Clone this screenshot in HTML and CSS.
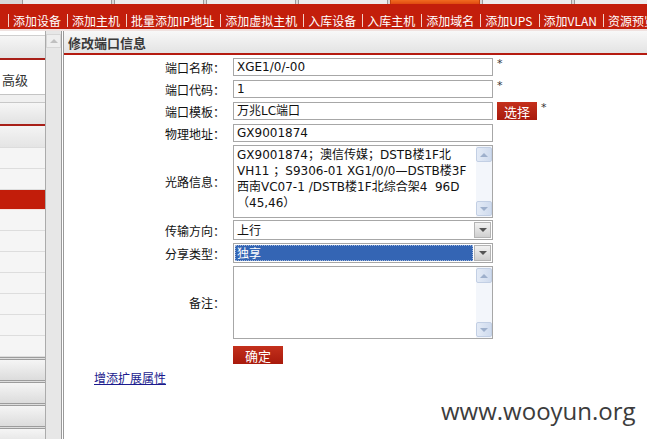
FILE: index.html
```html
<!DOCTYPE html>
<html lang="zh">
<head>
<meta charset="utf-8">
<title>修改端口信息</title>
<link rel="stylesheet" href="styles.css">
</head>
<body>
<div class="page">
  <div class="tabs">
    <span class="tab"></span><span class="tab"></span><span class="tab"></span><span class="tab"></span><span class="tab active"></span><span class="tab"></span><span class="tab"></span>
  </div>
  <div class="nav">
    <span class="nav-item">添加设备</span>
    <span class="nav-item">添加主机</span>
    <span class="nav-item">批量添加IP地址</span>
    <span class="nav-item">添加虚拟主机</span>
    <span class="nav-item">入库设备</span>
    <span class="nav-item">入库主机</span>
    <span class="nav-item">添加域名</span>
    <span class="nav-item">添加UPS</span>
    <span class="nav-item">添加VLAN</span>
    <span class="nav-item">资源预览</span>
  </div>
  <div class="nav-edge"></div>
  <div class="layout">
    <div class="side">
      <div class="s-gap"></div>
      <div class="s-bar s-bar1"></div>
      <div class="s-text">高级</div>
      <div class="s-band"></div>
      <div class="s-bar s-bar2"></div>
      <div class="s-bar3"></div>
      <div class="s-row"></div>
      <div class="s-row"></div>
      <div class="s-row s-active"></div>
      <div class="s-row"></div>
      <div class="s-row"></div>
      <div class="s-row"></div>
      <div class="s-row"></div>
      <div class="s-row"></div>
      <div class="s-row"></div>
      <div class="s-row"></div>
      <div class="s-menu"></div>
      <div class="s-menu"></div>
      <div class="s-menu"></div>
      <div class="s-menu"></div>
    </div>
    <div class="side-scroll">
      <div class="sc-up"><span class="tri-up"></span></div>
    </div>
    <div class="divider"></div>
    <div class="main">
      <div class="main-head">修改端口信息</div>
      <div class="form">
        <div class="row r4">
          <div class="label">端口名称：</div>
          <div class="field"><div class="input">XGE1/0/-00</div><span class="star">*</span></div>
        </div>
        <div class="row r4">
          <div class="label">端口代码：</div>
          <div class="field"><div class="input">1</div><span class="star">*</span></div>
        </div>
        <div class="row r4">
          <div class="label">端口模板：</div>
          <div class="field"><div class="input">万兆LC端口</div><span class="btn btn-pick">选择</span><span class="star">*</span></div>
        </div>
        <div class="row r3">
          <div class="label">物理地址：</div>
          <div class="field"><div class="input">GX9001874</div></div>
        </div>
        <div class="row r2">
          <div class="label">光路信息：</div>
          <div class="field">
            <div class="area">
              <div class="area-text">GX9001874；澳信传媒；DSTB楼1F北<br>VH11 ；S9306-01 XG1/0/0—DSTB楼3F<br>西南VC07-1 /DSTB楼1F北综合架4&nbsp;&nbsp;96D<br>（45,46）</div>
              <div class="vscroll"><span class="vs-btn"><span class="vs-up"></span></span><span class="vs-btn"><span class="vs-down"></span></span></div>
            </div>
          </div>
        </div>
        <div class="row r3">
          <div class="label">传输方向：</div>
          <div class="field"><div class="select"><span class="sel-text">上行</span><span class="sel-btn"><span class="tri-down"></span></span></div></div>
        </div>
        <div class="row r3">
          <div class="label">分享类型：</div>
          <div class="field"><div class="select"><span class="sel-text sel-hl">独享</span><span class="sel-btn"><span class="tri-down"></span></span></div></div>
        </div>
        <div class="row r7">
          <div class="label">备注：</div>
          <div class="field">
            <div class="area">
              <div class="area-text"></div>
              <div class="vscroll"><span class="vs-btn"><span class="vs-up"></span></span><span class="vs-btn"><span class="vs-down"></span></span></div>
            </div>
          </div>
        </div>
        <div class="row">
          <div class="label"></div>
          <div class="field"><span class="btn btn-ok">确定</span></div>
        </div>
        <a class="ext-link" href="#">增添扩展属性</a>
      </div>
      <div class="watermark">www.wooyun.org</div>
    </div>
  </div>
</div>
</body>
</html>
```

FILE: styles.css
```css
* { box-sizing: border-box; }
html, body { margin: 0; padding: 0; background: #fff; }
body {
  font-family: "Noto Sans CJK SC", "DejaVu Sans", sans-serif;
  font-size: 12px;
  color: #000;
}
.page { width: 647px; height: 439px; overflow: hidden; position: relative; }

/* top tabs */
.tabs {
  height: 4px;
  display: flex;
  gap: 2px;
  padding-left: 22px;
  background: #d8d8d8;
  overflow: hidden;
}
.tab {
  width: 90px;
  flex: none;
  height: 4px;
  background: #ececec;
  border-left: 1px solid #9a9a9a;
  border-right: 1px solid #9a9a9a;
}
.tab.active { background: linear-gradient(#f06a20, #e04a10); border-color: #c0400c; }

/* red nav */
.nav {
  height: 25px;
  background: #c31e0b;
  display: flex;
  align-items: flex-end;
  padding: 0 0 2px 8px;
  white-space: nowrap;
  overflow: hidden;
  color: #fff;
}
.nav-item {
  flex: none;
  border-left: 1px solid #f3d0c8;
  padding-left: 4px;
  margin-right: 6px;
  line-height: 13px;
  height: 13px;
  font-size: 12px;
}
.nav-edge { height: 2px; background: #efe1df; }

/* layout */
.layout { display: flex; height: 408px; }

.side {
  width: 46px;
  flex: none;
  border-right: 1px solid #ababab;
  display: flex;
  flex-direction: column;
  overflow: hidden;
}
.s-gap { height: 5px; flex: none; border-bottom: 1px solid #cfcfcf; }
.s-bar { flex: none; background: linear-gradient(#f6f6f6, #e2e2e2); }
.s-bar1 { height: 24px; border-bottom: 2px solid #a81f18; }
.s-text {
  height: 35px;
  flex: none;
  border-bottom: 1px solid #c4c4c4;
  padding-left: 2px;
  line-height: 40px;
  font-size: 13px;
  color: #333;
}
.s-band { height: 8px; flex: none; background: #f0f0f0; border-bottom: 1px solid #c8c8c8; }
.s-bar2 { height: 23px; border-bottom: 2px solid #a81f18; }
.s-bar3 { height: 22px; flex: none; background: linear-gradient(#f4f4f4, #e4e4e4); border-bottom: 1px solid #dcdcdc; }
.s-row { height: 21px; flex: none; background: #f5f5f5; border-bottom: 1px solid #dddddd; }
.s-row.s-active { background: #c21d0a; border-bottom: 1px solid #f6e2de; height: 20px; }
.s-menu {
  height: 23px;
  flex: none;
  border-top: 3px double #9c9c9c;
  background: linear-gradient(#f5f5f5, #dcdcdc);
}

.side-scroll {
  width: 15px;
  flex: none;
  background: #e7e7e7;
  padding-top: 3px;
}
.sc-up {
  height: 14px;
  background: #eeeeee;
  border: 1px solid #d6d6d6;
  display: flex;
  align-items: center;
  justify-content: center;
}
.tri-up {
  width: 0; height: 0;
  border-left: 4px solid transparent;
  border-right: 4px solid transparent;
  border-bottom: 4px solid #c0c0c0;
}

.divider {
  width: 3px;
  flex: none;
  border-left: 1px solid #9a9a9a;
  border-right: 1px solid #9a9a9a;
  background: #fff;
}

.main { flex: 1; position: relative; }
.main-head {
  height: 24px;
  background: linear-gradient(#f8f8f8, #e3e3e3);
  border-bottom: 2px solid #b51b10;
  padding-left: 4px;
  font-size: 13px;
  font-weight: bold;
  color: #3a3a3a;
  line-height: 23px;
}

.form { padding-top: 3px; }
.row { display: flex; align-items: center; }
.row.r4 { margin-bottom: 4px; }
.row.r3 { margin-bottom: 3px; }
.row.r2 { margin-bottom: 2px; }
.row.r7 { margin-bottom: 7px; }
.label {
  width: 161px;
  flex: none;
  text-align: right;
  font-size: 12px;
  color: #111;
}
.field { margin-left: 8px; display: flex; align-items: center; }
.input {
  width: 260px;
  height: 18px;
  border: 1px solid #a7a7a7;
  padding-left: 3px;
  font-family: "DejaVu Sans", "Noto Sans CJK SC", sans-serif;
  font-size: 12px;
  line-height: 16px;
  color: #111;
  white-space: nowrap;
  overflow: hidden;
}
.star {
  font-family: "DejaVu Sans", sans-serif;
  font-size: 11px;
  color: #333;
  margin-left: 4px;
  align-self: flex-start;
  line-height: 12px;
}
.btn {
  display: inline-flex;
  align-items: center;
  justify-content: center;
  background: linear-gradient(#c4301c, #a81a0c);
  color: #fff;
  font-size: 13px;
  height: 18px;
}
.btn-pick { width: 40px; margin-left: 4px; }
.btn-ok { width: 50px; }

.area {
  width: 260px;
  height: 73px;
  border: 1px solid #a7a7a7;
  display: flex;
}
.area-text {
  flex: 1;
  padding: 1px 0 0 3px;
  font-family: "DejaVu Sans", "Noto Sans CJK SC", sans-serif;
  font-size: 12px;
  line-height: 16px;
  color: #111;
  white-space: nowrap;
  overflow: hidden;
}
.vscroll {
  width: 16px;
  flex: none;
  background: #f3f6fb;
  display: flex;
  flex-direction: column;
  justify-content: space-between;
  padding: 1px 0;
}
.vs-btn {
  height: 15px;
  background: linear-gradient(90deg, #e4ebf6, #cfdbee);
  border: 1px solid #c2cfe4;
  border-radius: 2px;
  display: flex;
  align-items: center;
  justify-content: center;
}
.vs-up {
  width: 0; height: 0;
  border-left: 4px solid transparent;
  border-right: 4px solid transparent;
  border-bottom: 4px solid #9eb0cc;
}
.vs-down {
  width: 0; height: 0;
  border-left: 4px solid transparent;
  border-right: 4px solid transparent;
  border-top: 4px solid #9eb0cc;
}

.select {
  width: 260px;
  height: 20px;
  border: 1px solid #a7a7a7;
  display: flex;
  align-items: stretch;
  padding: 1px;
}
.sel-text {
  flex: 1;
  padding-left: 2px;
  font-size: 12px;
  line-height: 16px;
  color: #111;
  margin-right: 1px;
}
.sel-text.sel-hl {
  background: #3465b4;
  color: #fff;
  outline: 1px dotted #9fb6dc;
  outline-offset: -1px;
}
.sel-btn {
  width: 17px;
  flex: none;
  background: linear-gradient(#f2f2f2, #cfcfcf);
  border: 1px solid #b4b4b4;
  display: flex;
  align-items: center;
  justify-content: center;
}
.tri-down {
  width: 0; height: 0;
  border-left: 4px solid transparent;
  border-right: 4px solid transparent;
  border-top: 4px solid #555;
}

.ext-link {
  display: inline-block;
  margin: 6px 0 0 30px;
  color: #1b1b8e;
  text-decoration: underline;
  font-size: 12px;
  line-height: 15px;
}

.watermark {
  position: absolute;
  left: 377px;
  top: 368px;
  font-family: "Open Sans", sans-serif;
  font-size: 24px;
  line-height: 24px;
  color: #3c3c3c;
  white-space: nowrap;
}
```
